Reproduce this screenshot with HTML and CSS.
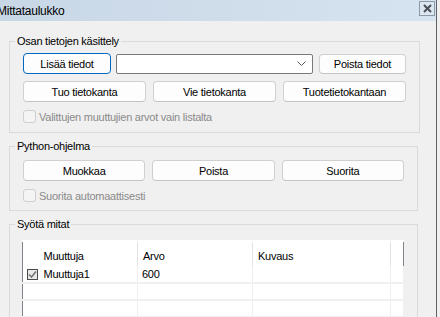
FILE: index.html
```html
<!DOCTYPE html>
<html lang="fi">
<head>
  <meta charset="UTF-8" />
  <title>Mittataulukko</title>
  <link rel="stylesheet" href="styles.css">
</head>
<body>
  <div class="window">
    <div class="titlebar">
      <span class="title">Mittataulukko</span>
      <span class="close">
        <svg width="9" height="9" viewBox="0 0 9 9"><path d="M1 1 L8 8 M8 1 L1 8" stroke="#4a4f57" stroke-width="2"/></svg>
      </span>
    </div>

    <div class="content">
      <!-- Osan tietojen käsittely -->
      <fieldset class="group">
        <legend>Osan tietojen käsittely</legend>
        <div class="row row-top">
          <button type="button" class="btn btn-default">Lisää tiedot</button>
          <div class="combo">
            <svg width="9" height="6" viewBox="0 0 9 6"><path d="M0.5 0.5 L4.5 4.5 L8.5 0.5" fill="none" stroke="#555" stroke-width="1"/></svg>
          </div>
          <button type="button" class="btn">Poista tiedot</button>
        </div>
        <div class="row row-three">
          <button type="button" class="btn">Tuo tietokanta</button>
          <button type="button" class="btn">Vie tietokanta</button>
          <button type="button" class="btn">Tuotetietokantaan</button>
        </div>
        <label class="check disabled"><span class="box"></span>Valittujen muuttujien arvot vain listalta</label>
      </fieldset>

      <!-- Python-ohjelma -->
      <fieldset class="group group-python">
        <legend>Python-ohjelma</legend>
        <div class="row row-three">
          <button type="button" class="btn">Muokkaa</button>
          <button type="button" class="btn">Poista</button>
          <button type="button" class="btn">Suorita</button>
        </div>
        <label class="check disabled"><span class="box"></span>Suorita automaattisesti</label>
      </fieldset>

      <!-- Syötä mitat -->
      <fieldset class="group group-last">
        <legend>Syötä mitat</legend>
        <table class="grid">
          <colgroup>
            <col style="width:18px">
            <col style="width:97px">
            <col style="width:115px">
            <col style="width:138px">
            <col>
          </colgroup>
          <thead>
            <tr>
              <th></th>
              <th>Muuttuja</th>
              <th>Arvo</th>
              <th>Kuvaus</th>
              <th class="filler"></th>
            </tr>
          </thead>
          <tbody>
            <tr>
              <td class="sel"><span class="mark">
                <svg width="9" height="9" viewBox="0 0 9 9"><path d="M1 4.5 L3.5 7 L8 1.5" fill="none" stroke="#777" stroke-width="1.6"/></svg>
              </span></td>
              <td>Muuttuja1</td>
              <td>600</td>
              <td></td>
              <td></td>
            </tr>
            <tr><td class="sel"></td><td></td><td></td><td></td><td></td></tr>
            <tr><td class="sel"></td><td></td><td></td><td></td><td></td></tr>
          </tbody>
        </table>
      </fieldset>
    </div>
  </div>
</body>
</html>
```

FILE: styles.css
```css
* {
  box-sizing: border-box;
}
body {
  margin: 0;
  background: #f0f0f0;
  font-family: 'Liberation Sans', Arial, sans-serif;
  font-size: 11px;
  letter-spacing: -0.25px;
  color: #000;
  overflow: hidden;
}
.window {
  width: 437px;
  height: 317px;
  background: #f0f0f0;
  border-right: 1px solid #5f6166;
  overflow: hidden;
}
.titlebar {
  height: 21px;
  background: linear-gradient(to right, #c8d7e6, #d6e3f0);
  display: flex;
  align-items: center;
  justify-content: space-between;
  padding-right: 1px;
}
.title {
  font-size: 12px;
  margin-left: -3px;
}
.close {
  width: 16px;
  height: 15px;
  margin-top: -4px;
  border: 1px solid #8d99a6;
  background: #dce6f0;
  display: flex;
  align-items: center;
  justify-content: center;
}
.content {
  padding: 14px 0 0 9px;
}
.group {
  width: 409px;
  margin: 0 0 7px 0;
  padding: 6px 13px 9px 13px;
  border: 1px solid #dadada;
}
.group legend {
  margin-left: -8px;
  padding: 0 2px;
  font-size: 11px;
}
.group-python {
  padding-top: 8px;
  padding-bottom: 8px;
}
.row {
  display: flex;
  height: 21px;
  margin-bottom: 7px;
}
.row-top .btn-default {
  width: 88px;
}
.row-top .combo {
  width: 197px;
  margin: 1px 6px 0 5px;
  height: 20px;
  background: #fff;
  border: 1px solid #7a7a7a;
  border-radius: 2px;
  display: flex;
  align-items: center;
  justify-content: flex-end;
  padding-right: 6px;
}
.row-top .btn:last-child {
  width: 87px;
  margin-top: 1px;
  height: 20px;
}
.row-three {
  display: grid;
  grid-template-columns: 1fr 1fr 1fr;
  column-gap: 7px;
}
.btn {
  height: 21px;
  padding: 0;
  font-family: inherit;
  font-size: 11px;
  letter-spacing: inherit;
  color: #000;
  background: #fdfdfd;
  border: 1px solid #d0d0d0;
  border-bottom-color: #c4c4c4;
  border-radius: 4px;
}
.btn-default {
  border-color: #0067c0;
}
.check {
  display: flex;
  align-items: center;
  height: 13px;
  margin-top: 8px;
}
.check .box {
  width: 13px;
  height: 13px;
  border: 1px solid #cfcfcf;
  border-radius: 3px;
  background: #f4f4f4;
  margin-right: 3px;
}
.check.disabled {
  color: #8a8a8a;
}
.group-last {
  height: 120px;
  padding-top: 10px;
}
.grid {
  width: 382px;
  border-collapse: collapse;
  table-layout: fixed;
  background: #fff;
  border: 1px solid #80838a;
  margin-left: -1px;
  box-shadow: inset 0 1px 0 #e6e6e6;
}
.grid th {
  height: 25px;
  font-weight: normal;
  text-align: left;
  padding: 3px 0 0 5px;
  border-right: 1px solid #e3e3e3;
  border-top: 2px solid #fff;
}
.grid th:first-child,
.grid th:nth-child(2) {
  padding-left: 3px;
}
.grid th:first-child {
  border-right: none;
}
.grid th.filler {
  border-right: none;
}
.grid td {
  height: 17px;
  padding: 0 0 0 4px;
  border-bottom: 2px solid #f0f0f0;
  border-right: 1px solid #efefef;
}
.grid td:nth-child(2) {
  padding-left: 3px;
}
.grid td.sel {
  border-right: none;
  padding: 0 0 0 4px;
}
.mark {
  display: flex;
  align-items: center;
  justify-content: center;
  width: 11px;
  height: 11px;
  border: 1px solid #4a4a4a;
  background: #e8e8e8;
}
```
